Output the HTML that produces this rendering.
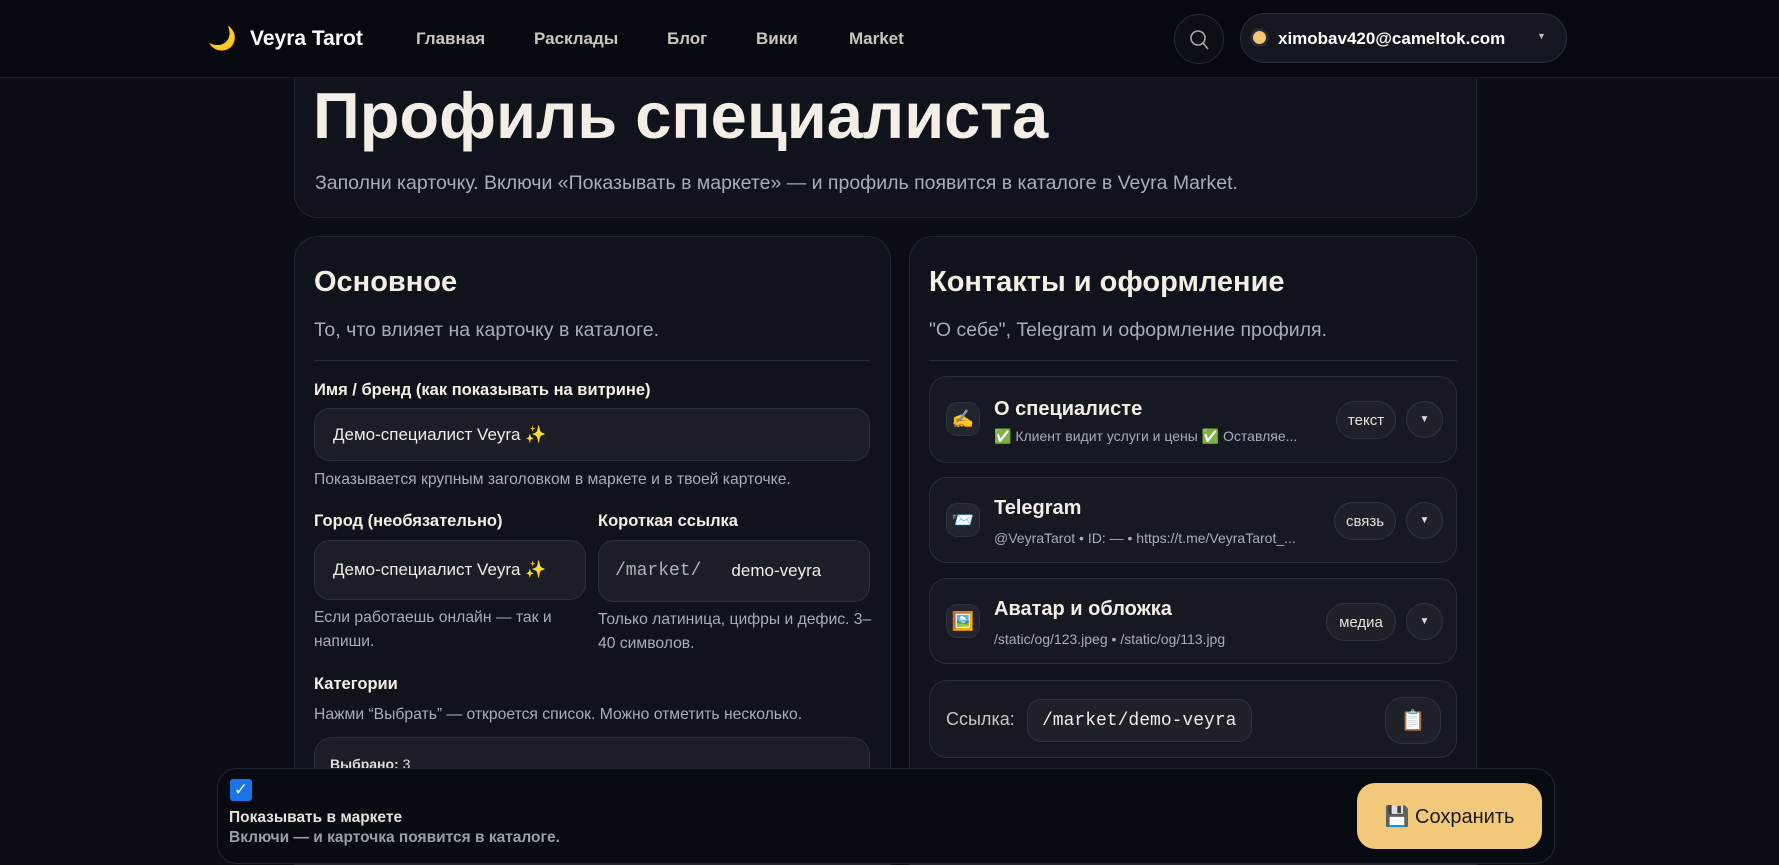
<!DOCTYPE html>
<html style="overflow:hidden;height:865px"><head><meta charset="utf-8"><style>
*{box-sizing:border-box;margin:0;padding:0}
body{width:1779px;height:865px;overflow:hidden;background:#0b0e15;font-family:"Liberation Sans","DejaVu Sans",sans-serif;color:#f3efe6;position:relative}
.abs{position:absolute}
.hdr{left:0;top:0;width:1779px;height:78px;background:#060910;border-bottom:1px solid #1a1e28;z-index:5}
.z{z-index:6}
.nav{font-weight:bold;font-size:17px;color:#c9c6c0;top:29px}
.card{background:#10131b;border:1px solid #222632;border-radius:24px}
.lbl{font-weight:bold;font-size:16.5px;color:#f3efe6}
.help{font-size:15.7px;color:#a9adb5;line-height:24px}
.inp{background:#1b1e27;border:1px solid #2c303c;border-radius:16px;font-size:17px;color:#f1ede6;padding-left:18px;display:flex;align-items:center}
.row{left:929px;width:528px;background:#161922;border:1px solid #2a2e3a;border-radius:18px}
.ico{left:16px;width:34px;height:34px;border-radius:11px;background:#22252e;border:1px solid #2e323d;display:flex;align-items:center;justify-content:center;font-size:18px}
.rt{left:64px;font-weight:bold;font-size:20px;color:#f3efe6}
.rs{left:64px;font-size:14px;color:#a9adb5;white-space:nowrap}
.pill{height:38px;border-radius:19px;background:#1e212a;border:1px solid #30343f;font-size:15px;color:#e6e2da;display:flex;align-items:center;justify-content:center}
.dd{width:37px;height:37px;border-radius:50%;background:#1e212a;border:1px solid #30343f;color:#ddd;font-size:10px;display:flex;align-items:center;justify-content:center}
</style></head><body>
<div class="abs hdr"></div>
<div class="abs z" style="left:208px;top:25px;font-size:23px;color:#f5c04a">🌙</div>
<div class="abs z" style="left:250px;top:27px;font-weight:bold;font-size:21px;color:#fff">Veyra Tarot</div>
<div class="abs nav z" style="left:416px">Главная</div>
<div class="abs nav z" style="left:534px">Расклады</div>
<div class="abs nav z" style="left:667px">Блог</div>
<div class="abs nav z" style="left:756px">Вики</div>
<div class="abs nav z" style="left:849px">Market</div>
<div class="abs z" style="left:1174px;top:14px;width:50px;height:50px;border-radius:50%;border:1px solid #262a35;background:#0c0f16"><svg width="50" height="50"><circle cx="23" cy="23" r="7" fill="none" stroke="#aaa" stroke-width="1.6"/><path d="M28 28l5 6" stroke="#aaa" stroke-width="1.6"/></svg></div>
<div class="abs z" style="left:1240px;top:13px;width:327px;height:50px;border-radius:25px;border:1px solid #2a2e39;background:#14171f"></div>
<div class="abs z" style="left:1253px;top:31px;width:13px;height:13px;border-radius:50%;background:#f3c77a;box-shadow:0 0 0 3px #2a2a2a"></div>
<div class="abs z" style="left:1278px;top:29px;font-weight:bold;font-size:17px;color:#fff">ximobav420@cameltok.com</div>
<div class="abs z" style="left:1537px;top:31px;font-size:9px;color:#bbb">▼</div>

<div class="abs card" style="left:294px;top:-30px;width:1183px;height:248px"></div>
<div class="abs" style="left:313px;top:78px;font-weight:bold;font-size:65px;color:#f3efe6">Профиль специалиста</div>
<div class="abs" style="left:315px;top:172px;font-size:19.5px;color:#a9adb5">Заполни карточку. Включи «Показывать в маркете» — и профиль появится в каталоге в Veyra Market.</div>

<div class="abs card" style="left:294px;top:236px;width:597px;height:629px;border-bottom-left-radius:0;border-bottom-right-radius:0"></div>
<div class="abs card" style="left:909px;top:236px;width:568px;height:629px;border-bottom-left-radius:0;border-bottom-right-radius:0"></div>

<div class="abs" style="left:314px;top:266px;font-weight:bold;font-size:29px">Основное</div>
<div class="abs" style="left:314px;top:319px;font-size:19.5px;color:#a9adb5">То, что влияет на карточку в каталоге.</div>
<div class="abs" style="left:314px;top:360px;width:556px;height:1px;background:#262a35"></div>
<div class="abs lbl" style="left:314px;top:381px">Имя / бренд (как показывать на витрине)</div>
<div class="abs inp" style="left:314px;top:408px;width:556px;height:53px">Демо-специалист Veyra ✨</div>
<div class="abs help" style="left:314px;top:468px">Показывается крупным заголовком в маркете и в твоей карточке.</div>
<div class="abs lbl" style="left:314px;top:512px">Город (необязательно)</div>
<div class="abs lbl" style="left:598px;top:512px">Короткая ссылка</div>
<div class="abs inp" style="left:314px;top:540px;width:272px;height:60px">Демо-специалист Veyra ✨</div>
<div class="abs inp" style="left:598px;top:540px;width:272px;height:62px;padding-left:16px"><span style="font-family:'Liberation Mono',monospace;color:#b0b3ba;font-size:18px">/market/</span><span style="margin-left:30px">demo-veyra</span></div>
<div class="abs help" style="left:314px;top:606px;width:270px">Если работаешь онлайн — так и напиши.</div>
<div class="abs help" style="left:598px;top:608px;width:290px;white-space:nowrap">Только латиница, цифры и дефис. 3–<br>40 символов.</div>
<div class="abs lbl" style="left:314px;top:675px">Категории</div>
<div class="abs help" style="left:314px;top:703px">Нажми “Выбрать” — откроется список. Можно отметить несколько.</div>
<div class="abs" style="left:314px;top:737px;width:556px;height:100px;background:#1b1e27;border:1px solid #2c303c;border-radius:18px"></div>
<div class="abs" style="left:330px;top:756px;font-size:14px;color:#ddd"><b>Выбрано:</b> 3</div>

<div class="abs" style="left:929px;top:266px;font-weight:bold;font-size:29px">Контакты и оформление</div>
<div class="abs" style="left:929px;top:319px;font-size:19.5px;color:#a9adb5">"О себе", Telegram и оформление профиля.</div>
<div class="abs" style="left:929px;top:360px;width:528px;height:1px;background:#262a35"></div>

<div class="abs row" style="top:376px;height:87px">
 <div class="abs ico" style="top:25px">✍️</div>
 <div class="abs rt" style="top:21px">О специалисте</div>
 <div class="abs rs" style="top:51px">✅ Клиент видит услуги и цены ✅ Оставляе...</div>
 <div class="abs pill" style="left:406px;top:24px;width:60px">текст</div>
 <div class="abs dd" style="left:476px;top:24px">▼</div>
</div>
<div class="abs row" style="top:477px;height:86px">
 <div class="abs ico" style="top:25px">📨</div>
 <div class="abs rt" style="top:19px">Telegram</div>
 <div class="abs rs" style="top:52px">@VeyraTarot • ID: — • https://t.me/VeyraTarot_...</div>
 <div class="abs pill" style="left:404px;top:24px;width:62px">связь</div>
 <div class="abs dd" style="left:476px;top:24px">▼</div>
</div>
<div class="abs row" style="top:578px;height:86px">
 <div class="abs ico" style="top:25px">🖼️</div>
 <div class="abs rt" style="top:19px">Аватар и обложка</div>
 <div class="abs rs" style="top:52px">/static/og/123.jpeg • /static/og/113.jpg</div>
 <div class="abs pill" style="left:396px;top:24px;width:70px">медиа</div>
 <div class="abs dd" style="left:476px;top:24px">▼</div>
</div>
<div class="abs row" style="top:680px;height:78px">
 <div class="abs" style="left:16px;top:28px;font-size:18px;color:#c9c6c0">Ссылка:</div>
 <div class="abs" style="left:97px;top:18px;width:225px;height:43px;border-radius:14px;background:#1e212a;border:1px solid #30343f;font-family:'Liberation Mono',monospace;font-size:18px;color:#f1ede6;display:flex;align-items:center;padding-left:14px">/market/demo-veyra</div>
 <div class="abs" style="left:455px;top:16px;width:56px;height:47px;border-radius:18px;background:#1e212a;border:1px solid #30343f;display:flex;align-items:center;justify-content:center;font-size:20px">📋</div>
</div>

<div class="abs" style="left:217px;top:768px;width:1338px;height:96px;background:#080b11;border:1px solid #232733;border-radius:20px"></div>
<div class="abs" style="left:230px;top:779px;width:22px;height:22px;border-radius:3px;background:#1a73e8;color:#fff;font-size:17px;font-weight:bold;text-align:center;line-height:22px">✓</div>
<div class="abs" style="left:229px;top:809px;font-weight:bold;font-size:15.5px;color:#e6e2da">Показывать в маркете</div>
<div class="abs" style="left:229px;top:829px;font-weight:bold;font-size:15.5px;color:#9a9ea6">Включи — и карточка появится в каталоге.</div>
<div class="abs" style="left:1357px;top:783px;width:185px;height:66px;border-radius:18px;background:#f2c97a;color:#1a1a1a;font-size:20px;display:flex;align-items:center;justify-content:center">💾 Сохранить</div>
</body></html>
